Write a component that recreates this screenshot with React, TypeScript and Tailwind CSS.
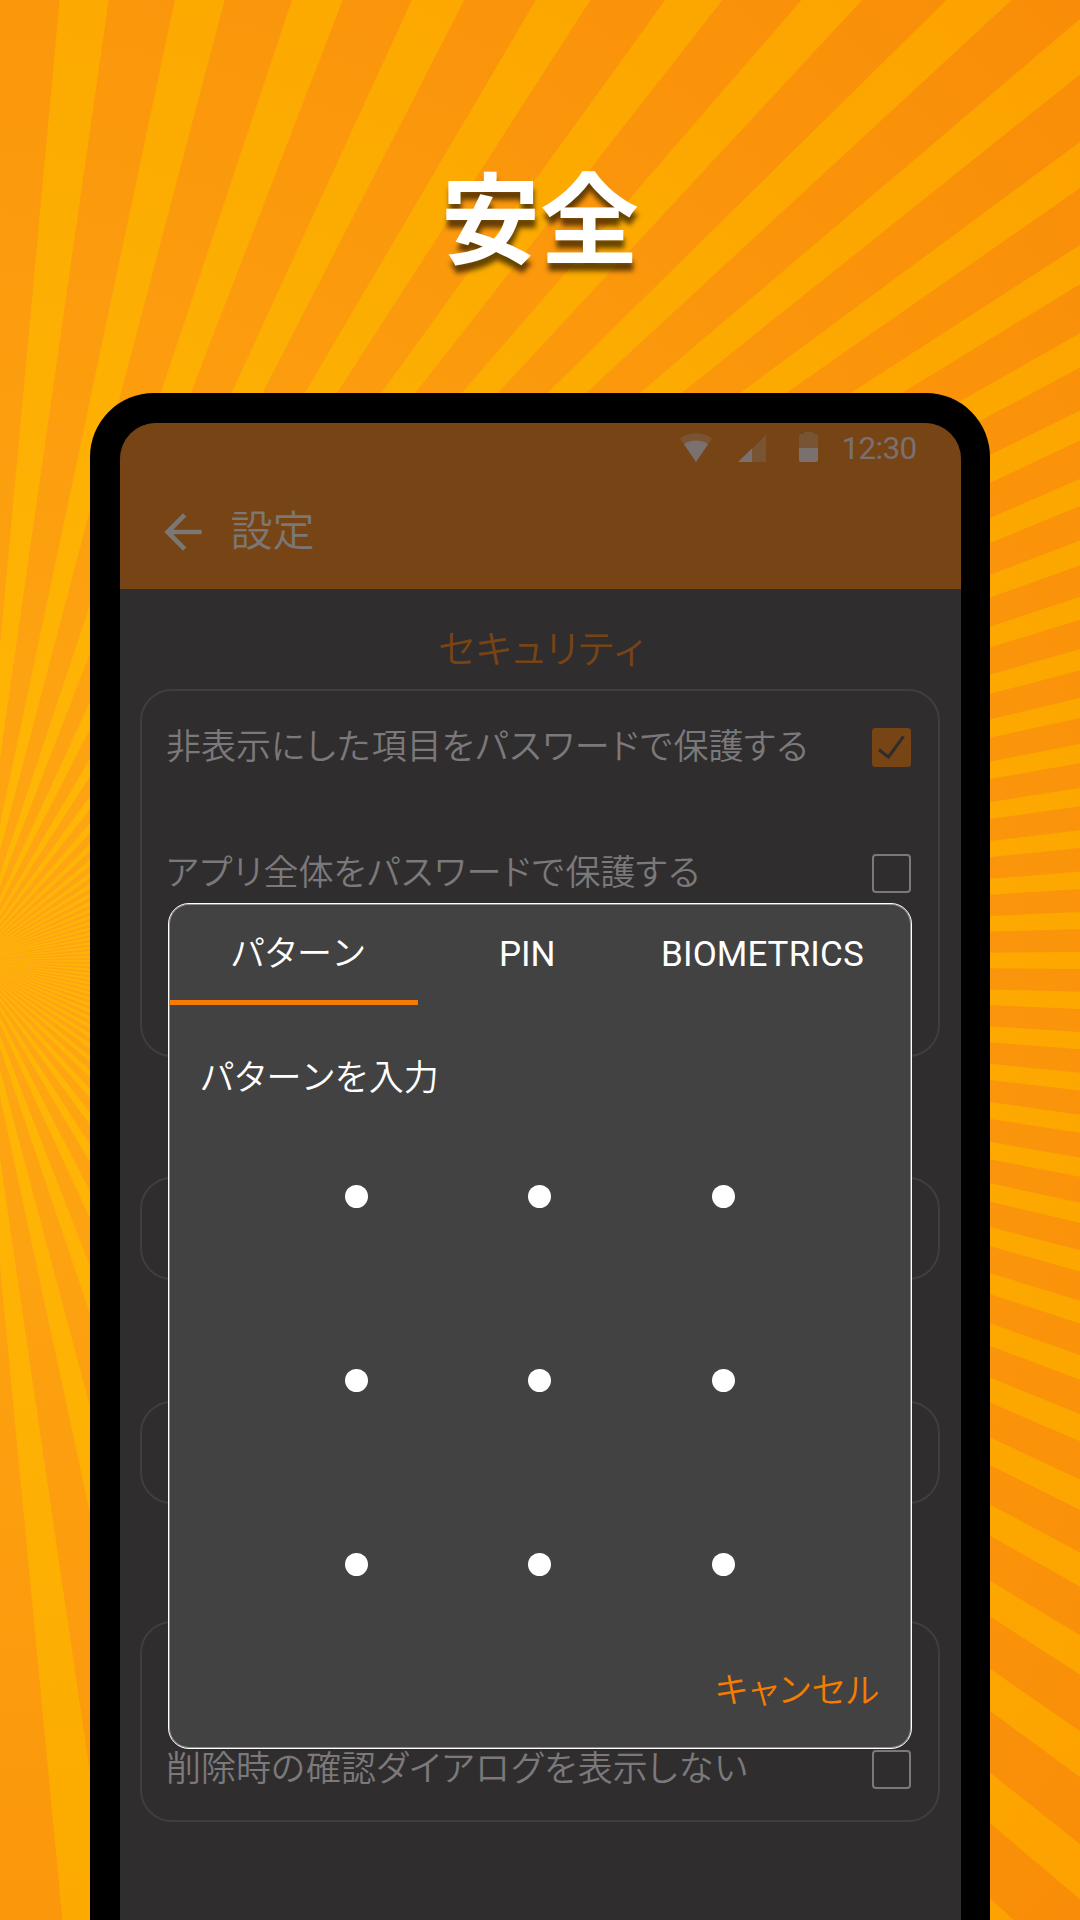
import React from "react";

const CX = -29;
const CY = 961;
const STRETCH = 1.82;

// End point of a ray edge, angle in degrees clockwise from straight up.
function edge(deg: number) {
  const a = (deg * Math.PI) / 180;
  const r = 3200;
  return `${(CX + r * STRETCH * Math.sin(a)).toFixed(1)} ${(CY - r * Math.cos(a)).toFixed(1)}`;
}

const rays = Array.from({ length: 96 }, (_, i) => {
  const start = 2.9 + i * 3.75;
  return `M${CX} ${CY}L${edge(start)}L${edge(start + 1.6)}Z`;
}).join("");

function Sunburst() {
  return (
    <svg className="absolute inset-0" width="1080" height="1920" viewBox="0 0 1080 1920">
      <defs>
        <radialGradient id="base" gradientUnits="userSpaceOnUse" cx={CX} cy={CY} r="1500">
          <stop offset="0" stopColor="#fea713" />
          <stop offset="0.6" stopColor="#fb980c" />
          <stop offset="1" stopColor="#f98c08" />
        </radialGradient>
        <radialGradient id="ray" gradientUnits="userSpaceOnUse" cx={CX} cy={CY} r="1500">
          <stop offset="0" stopColor="#ffb806" />
          <stop offset="0.6" stopColor="#fcab01" />
          <stop offset="1" stopColor="#fda100" />
        </radialGradient>
      </defs>
      <rect width="1080" height="1920" fill="url(#base)" />
      <path d={rays} fill="url(#ray)" />
    </svg>
  );
}

// Japanese label whose kana runs are tracked slightly wider than its kanji.
function Label({ text }: { text: string }) {
  const runs = text.match(/[\u3040-\u30ff]+|[^\u3040-\u30ff]+/g) ?? [];
  return (
    <>
      {runs.map((run, i) => (
        <span key={i} className={/[\u3040-\u30ff]/.test(run) ? "tracking-[1.35px]" : ""}>
          {run}
        </span>
      ))}
    </>
  );
}

function StatusBar() {
  return (
    <div className="flex h-[53px] items-end justify-end pr-[44px] text-[#7a716f]">
      <svg width="32" height="29" viewBox="0 0 32 29" fill="currentColor" className="mb-[14px]">
        <path opacity="0.35" d="M0 5.6C9.5-1.6 22.5-1.6 32 5.6L16 29Z" />
        <path d="M4 11.2C11.3 6.3 20.7 6.3 28 11.2L16 29Z" />
      </svg>
      <svg width="28" height="27" viewBox="0 0 28 27" fill="currentColor" className="mb-[14px] ml-[26px]">
        <path opacity="0.35" d="M28 0V27H0Z" />
        <path d="M14 13.5V27H0Z" />
      </svg>
      <svg width="19" height="30" viewBox="0 0 19 30" fill="currentColor" className="mb-[14px] ml-[33px]">
        <path opacity="0.35" d="M5 0h9v2h3a2 2 0 0 1 2 2v12H0V4a2 2 0 0 1 2-2h3Z" />
        <path d="M0 16h19v12a2 2 0 0 1-2 2H2a2 2 0 0 1-2-2Z" />
      </svg>
      <span className="mb-[11px] ml-[23.5px] text-[31.5px] leading-[32px] font-normal tracking-[-0.7px]">12:30</span>
    </div>
  );
}

function Checkbox({ checked = false }: { checked?: boolean }) {
  if (checked) {
    return (
      <svg width="39" height="39" viewBox="0 0 39 39">
        <rect width="39" height="39" rx="3.5" fill="#774415" />
        <path d="M7 21.8L16.5 29L31.5 8.3" fill="none" stroke="#302d2f" strokeWidth="3.1" />
      </svg>
    );
  }
  return <div className="size-[39px] rounded-[4px] border-2 border-[#7b797a]" />;
}

function Row({ label, checked }: { label: string; checked?: boolean }) {
  return (
    <div className="flex h-[39px] items-center justify-between pl-[24px] pr-[27px]">
      <span className="text-[35px] leading-[39px] whitespace-nowrap text-[#7b797a]">
        <Label text={label} />
      </span>
      <Checkbox checked={checked} />
    </div>
  );
}

const card = "rounded-[32px] border-2 border-[#403e3f]";

function Dialog() {
  return (
    <div className="absolute left-[168px] top-[903px] flex h-[846px] w-[744px] flex-col rounded-[21px] border border-white bg-[#424242] text-[35px] text-white shadow-[inset_0_0_0_1px_rgba(255,255,255,0.4)]">
      <div className="flex h-[101px] px-px">
        <div className="flex w-[248px] flex-col justify-between pt-[31px]">
          <span className="pl-[61px] leading-[40px]">
            <Label text="パターン" />
          </span>
          <div className="h-[5px] bg-[#f57c00]" />
        </div>
        <div className="w-[218px] pt-[31px] pl-[81px] leading-[40px] font-normal">PIN</div>
        <div className="pt-[31px] pl-[25px] leading-[40px] font-normal tracking-[0.15px]">BIOMETRICS</div>
      </div>
      <div className="pt-[54px] pl-[31.5px] leading-[40px]">
        <Label text="パターンを入力" />
      </div>
      <div className="mt-[86px] ml-[175.5px] grid grid-cols-[repeat(3,23px)] gap-x-[160.7px] gap-y-[161px]">
        {Array.from({ length: 9 }, (_, i) => (
          <div key={i} className="size-[23px] rounded-full bg-white" />
        ))}
      </div>
      <div className="mt-auto pr-[30.5px] pb-[36px] text-right leading-[40px] text-[#f57c00]">
        <Label text="キャンセル" />
      </div>
    </div>
  );
}

export default function App() {
  return (
    <div
      className="relative h-[1920px] w-[1080px] overflow-hidden font-['Roboto','Noto_Sans_CJK_JP',sans-serif] font-[350] [font-feature-settings:'palt'] [font-kerning:none]"
      lang="ja"
    >
      <Sunburst />
      <div className="relative flex h-full flex-col items-center">
        <h1 className="mt-[138px] h-[255px] font-['Noto_Sans_CJK_JP'] text-[99px] font-bold leading-[150px] text-white [font-feature-settings:normal] [text-shadow:1px_8px_5px_rgba(0,0,0,0.6)]">
          安全
        </h1>
        <div className="h-[1527px] w-[900px] rounded-t-[64px] bg-black px-[29.5px] pt-[29.5px]">
          <div className="h-full overflow-hidden rounded-t-[36px] bg-[#302d2f]">
            <header className="h-[166.5px] bg-[#774415]">
              <StatusBar />
              <div className="flex h-[113px] items-center pl-[35.5px] text-[#7b7775]">
                <svg width="56" height="56" viewBox="0 0 24 24" fill="currentColor">
                  <path d="M20 11H7.83l5.59-5.59L12 4l-8 8 8 8 1.41-1.41L7.83 13H20v-2z" />
                </svg>
                <span className="ml-[19.5px] text-[42px] leading-[50px]">設定</span>
              </div>
            </header>
            <main className="px-[20.5px]">
              <h2 className="h-[100px] pt-[36px] pl-[3px] text-center text-[38.5px] leading-[50px] tracking-[0.8px] text-[#774415]">
                セキュリティ
              </h2>
              <section className={`${card} h-[368px] pt-[37px]`}>
                <Row label="非表示にした項目をパスワードで保護する" checked />
                <div className="h-[87px]" />
                <Row label="アプリ全体をパスワードで保護する" />
              </section>
              <section className={`${card} mt-[120px] h-[103px]`} />
              <section className={`${card} mt-[121px] h-[103px]`} />
              <section className={`${card} mt-[117px] flex h-[201px] flex-col justify-end pb-[31px]`}>
                <Row label="削除時の確認ダイアログを表示しない" />
              </section>
            </main>
          </div>
        </div>
      </div>
      <Dialog />
    </div>
  );
}
